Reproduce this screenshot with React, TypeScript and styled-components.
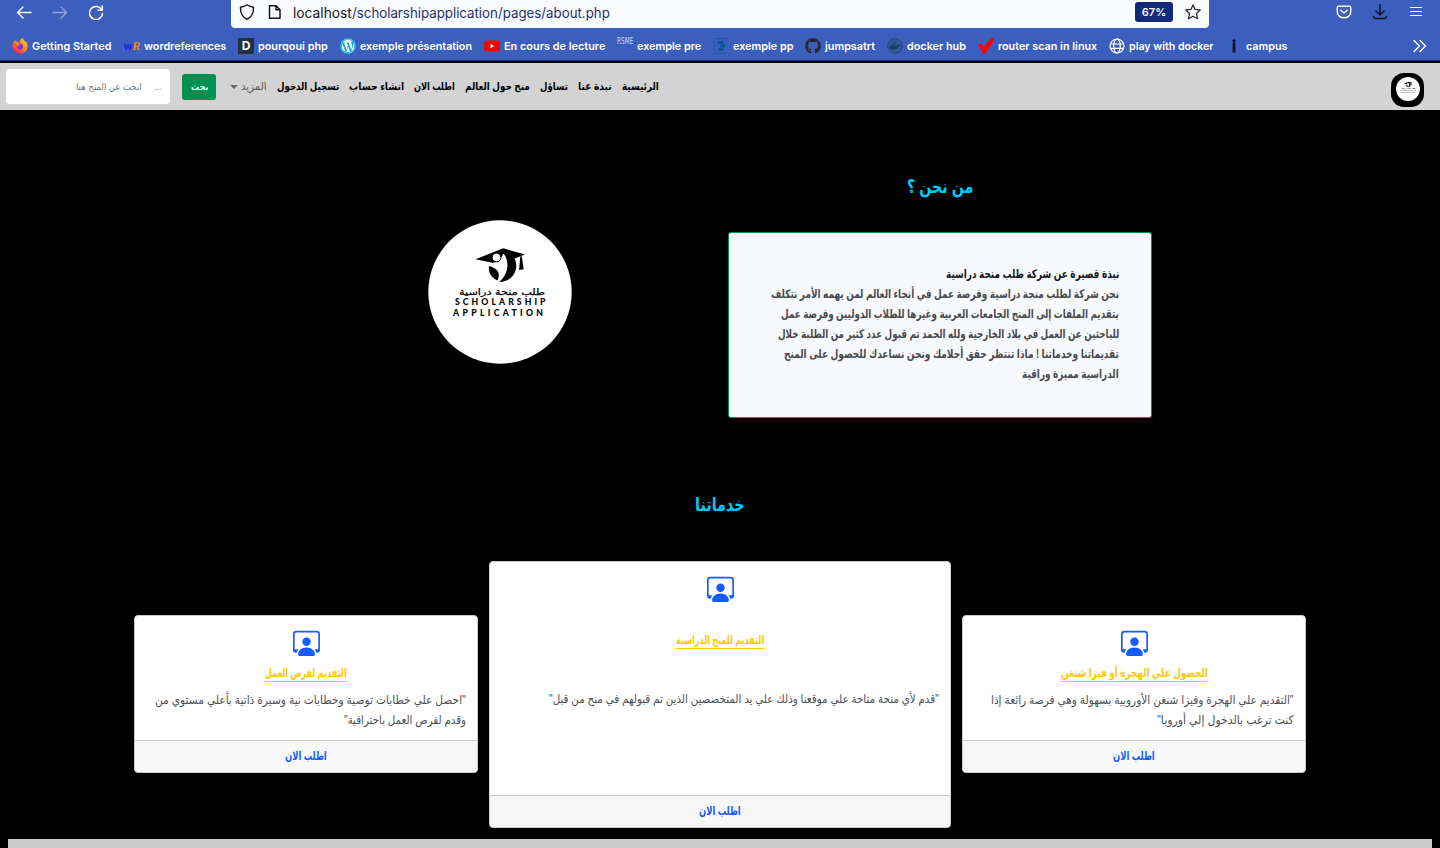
import React, { useLayoutEffect, useRef, useState } from 'react';
import styled, { createGlobalStyle } from 'styled-components';
import { BsPersonWorkspace } from 'react-icons/bs';
import { FaFirefoxBrowser, FaWordpress, FaGithub, FaDocker } from 'react-icons/fa';

const ARABIC = '"Liberation Sans", "DejaVu Sans", sans-serif';
const LATIN = 'Inter, "Liberation Sans", sans-serif';

const GlobalStyle = createGlobalStyle`
  * { box-sizing: border-box; }
  html, body { margin: 0; padding: 0; background: #000; overflow: hidden; }
  #root { height: 848px; }
`;

const Page = styled.div`
  width: 1440px;
  height: 848px;
  display: flex;
  flex-direction: column;
  background: #000;
  font-family: ${ARABIC};
  overflow: hidden;
`;

/* A single line of text that keeps to a fixed measure. */
const Measure = styled.span<{ $w: number }>`
  display: block;
  flex: none;
  width: ${p => p.$w}px;
  direction: ltr;
  white-space: nowrap;
`;
const MeasureText = styled.span`
  display: inline-block;
  transform-origin: left center;
  white-space: nowrap;
`;

function Line({ w, children, ltr = false }: { w: number; children: string; ltr?: boolean }) {
  const ref = useRef<HTMLSpanElement>(null);
  const [scale, setScale] = useState(1);
  useLayoutEffect(() => {
    if (ref.current) setScale(w / ref.current.offsetWidth);
  }, [w]);
  return (
    <Measure $w={w}>
      <MeasureText ref={ref} dir={ltr ? 'ltr' : 'rtl'} style={{ transform: `scaleX(${scale})` }}>
        {children}
      </MeasureText>
    </Measure>
  );
}

/* ---------- browser chrome ---------- */
const Chrome = styled.header`
  flex: none;
  height: 61px;
  background: #3c5fbd;
  border-bottom: 1px solid #14297c;
  font-family: ${LATIN};
`;
const Toolbar = styled.div`
  height: 28px;
  display: flex;
  align-items: flex-start;
`;
const NavButtons = styled.div`
  width: 231px;
  padding: 4px 0 0 16px;
  display: flex;
  gap: 20px;
`;
const AddressBar = styled.div`
  width: 978px;
  height: 28px;
  padding: 0 8px;
  display: flex;
  align-items: center;
  background: #fafbff;
  border-radius: 0 0 4px 4px;
`;
const AddressIcons = styled.div`
  display: flex;
  gap: 12px;
  width: 54px;
  padding-bottom: 4px;
`;
const Address = styled.div`
  flex: 1;
  font-size: 14px;
  line-height: 20px;
  color: #15141a;
  padding-bottom: 2px;
  display: flex;
`;
const AddressPath = styled.span`color: #1f3068;`;
const Zoom = styled.div`
  width: 38px;
  height: 20px;
  margin: 0 12px 4px 0;
  display: flex;
  align-items: center;
  justify-content: center;
  border-radius: 3px;
  background: #14297c;
  color: #fff;
  font-size: 11px;
  font-weight: 600;
`;
const StarBox = styled.div`
  height: 16px;
  margin-bottom: 4px;
`;
const ToolIcons = styled.div`
  flex: 1;
  display: flex;
  justify-content: flex-end;
  gap: 20px;
  padding: 4px 16px 0 0;
`;
const Bookmarks = styled.div`
  height: 32px;
  padding: 4px 12px 0;
  display: flex;
  align-items: center;
  gap: 12px;
  color: #fff;
  font-size: 11px;
  font-weight: 600;
  line-height: 16px;
`;
const Bookmark = styled.div`
  flex: none;
  display: flex;
  align-items: center;
  gap: 4px;
`;
const Favicon = styled.div`
  width: 16px;
  height: 16px;
  display: flex;
  align-items: center;
  justify-content: center;
`;
const LetterD = styled(Favicon)`
  background: #22303f;
  color: #fff;
  font-size: 12px;
  font-weight: 700;
`;
const WordRef = styled(Favicon)`
  color: #2a1be0;
  font-size: 10px;
  font-weight: 700;
  i { color: #f08a24; font-size: 12px; font-family: "Liberation Serif", serif; }
`;
const Rsme = styled(Favicon)`
  align-items: flex-start;
  font-family: "DejaVu Sans Condensed", sans-serif;
  font-size: 8px;
  font-weight: 400;
  line-height: 8px;
  color: #d3dbf4;
`;
const MoreMarks = styled.div`
  margin-left: auto;
  margin-right: 1px;
  height: 16px;
`;

/* ---------- site navigation ---------- */
const SiteNav = styled.nav`
  flex: none;
  height: 47px;
  margin-top: 2px;
  padding: 0 16px 0 5px;
  display: flex;
  align-items: center;
  background: #d3d3d3;
`;
const Search = styled.div`
  width: 166px;
  height: 37px;
  padding: 0 8px 0 10px;
  display: flex;
  align-items: center;
  justify-content: flex-end;
  gap: 12px;
  border: 1px solid #ced4da;
  border-radius: 4px;
  background: #fff;
  color: #6c757d;
  font-size: 9px;
`;
const SearchButton = styled.button`
  width: 34px;
  height: 26px;
  margin-left: 11px;
  padding: 0;
  display: flex;
  align-items: center;
  justify-content: center;
  border: 0;
  border-radius: 3px;
  background: #009150;
  color: #fff;
  font: bold 9px ${ARABIC};
`;
const More = styled.div`
  margin-left: 14px;
  display: flex;
  align-items: center;
  gap: 3px;
  color: #555;
  font-size: 11px;
  font-weight: 400;
`;
const Caret = styled.i`
  border: 4px solid transparent;
  border-top-color: #646464;
  border-bottom: 0;
`;
const Links = styled.div`
  flex: 1;
  display: flex;
  gap: 10px;
  margin-left: 10px;
  color: #000;
  font-size: 11px;
  font-weight: 700;
`;
const Badge = styled.div`
  width: 33px;
  height: 34px;
  margin-top: 6px;
  padding-bottom: 1px;
  display: flex;
  align-items: center;
  justify-content: center;
  border-radius: 13px;
  background: #000;
`;

/* ---------- about ---------- */
const About = styled.section`
  flex: none;
  height: 375px;
  display: flex;
`;
const LogoColumn = styled.div`
  width: 728px;
  padding: 110px 0 0 428px;
`;
const AboutColumn = styled.div`
  width: 424px;
  display: flex;
  flex-direction: column;
  align-items: center;
`;
const Heading = styled.h2<{ $top: number }>`
  margin: 0;
  padding-top: ${p => p.$top}px;
  color: #00c8f8;
  font-size: 19px;
  line-height: 28px;
  font-weight: 700;
`;
const AboutCard = styled.div`
  width: 424px;
  height: 186px;
  margin-top: 31px;
  padding: 31px 32px 0;
  display: flex;
  flex-direction: column;
  align-items: flex-end;
  border: 1px solid #009150;
  border-radius: 3px;
  background: #f8f9fc;
  color: #4a4b4e;
  font-size: 12px;
  line-height: 20px;
  font-weight: 700;
`;
const AboutTitle = styled.div`color: #16181b;`;

/* ---------- services ---------- */
const Services = styled.section`
  flex: none;
  height: 354px;
  display: flex;
  flex-direction: column;
  align-items: center;
`;
const Cards = styled.div`
  margin-top: 42px;
  display: flex;
  align-items: center;
  gap: 11px;
`;
const Card = styled.article<{ $large?: boolean }>`
  width: ${p => (p.$large ? 462 : 344)}px;
  height: ${p => (p.$large ? 267 : 158)}px;
  margin-bottom: ${p => (p.$large ? 0 : 1)}px;
  display: flex;
  flex-direction: column;
  border: 1px solid #c8c8c8;
  border-radius: 4px;
  background: #fff;
  overflow: hidden;
`;
const CardBody = styled.div<{ $large?: boolean }>`
  flex: 1;
  padding: 13px 11px 0;
  display: flex;
  flex-direction: column;
  align-items: flex-end;
  color: #4b4f54;
  font-size: 12px;
  line-height: 20px;
`;
const CardIcon = styled.div`
  align-self: center;
  height: 27px;
  color: #135dff;
`;
const CardTitle = styled.h3<{ $large?: boolean }>`
  align-self: center;
  margin: ${p => (p.$large ? '30px 0 40px' : '9px 0 8px')};
  height: 17px;
  border-bottom: 1px solid #ffc800;
  color: #ffc800;
  font-size: 12px;
  line-height: 16px;
  font-weight: 700;
`;
const CardFooter = styled.div`
  height: 32px;
  padding-bottom: 1px;
  display: flex;
  align-items: center;
  justify-content: center;
  border-top: 1px solid #c8c8c8;
  background: #f7f7f7;
  color: #135dff;
  font-size: 12px;
  font-weight: 700;
`;
const BottomBar = styled.footer`
  flex: none;
  height: 9px;
  margin: 0 8px;
  background: #ccc;
`;

const Logo = ({ size }: { size: number }) => (
  <svg width={size} height={size} viewBox="0 0 144 144" display="block">
    <circle cx="72" cy="72" r="71.7" fill="#fff" />
    <path d="M47.5 39.3 75.3 28.3 97 34.5 86.5 38.5C91.5 48 86 61.5 71 62 79 56 83 43 75.5 33.5L71 41.5 64.5 42.8Z" fill="#000" />
    <path d="M61 46C68 48 73.5 52 69.5 60.5 63 57.5 60 52 61 46Z" fill="#000" />
    <path d="M92.3 36.5 93.7 36 95.7 49.3 91 50Z" fill="#000" />
    <circle cx="68.5" cy="37.5" r="4.4" fill="#fff" stroke="#000" strokeWidth="1" />
    <g fill="#000">
      <text x="74" y="74.5" textAnchor="middle" direction="rtl" fontFamily="DejaVu Sans" fontSize="9" stroke="#000" strokeWidth=".25" textLength="86" lengthAdjust="spacingAndGlyphs">طلب منحة دراسية</text>
      <text x="27" y="84.8" fontFamily="Lato" fontWeight="900" fontSize="8.6" textLength="90.5">SCHOLARSHIP</text>
      <text x="25" y="96.2" fontFamily="Lato" fontWeight="900" fontSize="8.6" textLength="90">APPLICATION</text>
    </g>
  </svg>
);

const Stroke = ({ d, color = '#fff', opacity = 1, w = 1.4 }: { d: string; color?: string; opacity?: number; w?: number }) => (
  <svg width="16" height="16" viewBox="0 0 16 16" fill="none" stroke={color} strokeOpacity={opacity} strokeWidth={w} strokeLinecap="round" strokeLinejoin="round" display="block">
    <path d={d} />
  </svg>
);

const marks: { icon: React.ReactNode; text: string; w: number }[] = [
  { icon: (
    <svg width="16" height="16" viewBox="0 0 16 16">
      <defs><linearGradient id="flame" x1="1" y1="0" x2="0.2" y2="1"><stop offset="0" stopColor="#ffe226" /><stop offset="0.5" stopColor="#ff8a16" /><stop offset="1" stopColor="#f5156c" /></linearGradient></defs>
      <path d="M3 2 1 6a7.2 7.2 0 1 0 14 1C14.500 4 12 3 10.500 1 9.500 3 10 4 8 5 6 5 4 4 3 2Z" fill="url(#flame)" />
      <circle cx="8" cy="8.700" r="3.200" fill="#8a2be0" />
      <FaFirefoxBrowser size={16} fill="url(#flame)" />
    </svg>), text: 'Getting Started', w: 80 },
  { icon: <WordRef>w<i>R</i></WordRef>, text: 'wordreferences', w: 82 },
  { icon: <LetterD>D</LetterD>, text: 'pourqoui php', w: 70 },
  { icon: (
    <svg width="16" height="16" viewBox="0 0 16 16"><circle cx="8" cy="8" r="8" fill="#12a5d8" /><FaWordpress x={0.5} y={0.5} size={15} color="#fff" /></svg>), text: 'exemple présentation', w: 112 },
  { icon: (
    <svg width="16" height="16" viewBox="0 0 16 16"><rect x="0" y="2.5" width="16" height="11" rx="3" fill="#f00" /><path d="M6.5 5.8v4.4L10.2 8z" fill="#fff" /></svg>), text: 'En cours de lecture', w: 101 },
  { icon: <Rsme><Line w={16} ltr>RSME</Line></Rsme>, text: 'exemple pre', w: 64 },
  { icon: (
    <svg width="16" height="16" viewBox="0 0 16 16" fill="none" stroke="#0e529c"><path d="M1 .7h13M1 15.3h13M1.5 3v10" strokeWidth=".6" /><path d="M5 4.5h5.500M7 8h5M5 11.500h5.500" strokeWidth="3" /></svg>), text: 'exemple pp', w: 60 },
  { icon: <FaGithub size={16} color="#24292f" />, text: 'jumpsatrt', w: 50 },
  { icon: (
    <svg width="16" height="16" viewBox="0 0 16 16"><circle cx="8" cy="8" r="7.4" fill="#315a9c" stroke="#24476f" /><FaDocker x={2.5} y={2.5} size={11} color="#183c5e" /></svg>), text: 'docker hub', w: 59 },
  { icon: (
    <svg width="16" height="16" viewBox="0 0 16 16"><path d="M0 7 3.500 5.500 6 9 12.500.5 16 0V3L8 14.500 5.500 16Z" fill="#f00" /></svg>), text: 'router scan in linux', w: 99 },
  { icon: (
    <svg width="16" height="16" viewBox="0 0 16 16" fill="none" stroke="#fff" strokeWidth="1.2"><circle cx="8" cy="8" r="7" /><ellipse cx="8" cy="8" rx="3.3" ry="7" /><path d="M1.5 6h13M1.5 10.3h13" /></svg>), text: 'play with docker', w: 85 },
  { icon: (
    <svg width="16" height="16" viewBox="0 0 16 16" fill="none"><path d="M1 1c-1 5 3 5 5 4M15 1c1 5-3 5-5 4" stroke="#2a64c8" strokeWidth="1.4" /><circle cx="8" cy="3" r="1.7" fill="#101225" /><path d="M8 5v9.500" stroke="#101225" strokeWidth="2.800" /></svg>), text: 'campus', w: 41 },
];

const links: [string, number][] = [
  ['تسجيل الدخول', 62],
  ['انشاء حساب', 55],
  ['اطلب الان', 41],
  ['منح حول العالم', 65],
  ['تساؤل', 28],
  ['نبدة عنا', 34],
  ['الرئيسية', 37],
];

const about: [string, number][] = [
  ['نحن شركة لطلب منحة دراسية وفرصة عمل في أنحاء العالم لمن يهمه الأمر نتكلف', 348],
  ['بتقديم الملفات إلى المنح الجامعات العربية وغيرها للطلاب الدوليين وفرصة عمل', 338],
  ['للباحثين عن العمل في بلاد الخارجية ولله الحمد تم قبول عدد كثير من الطلبة خلال', 341],
  ['تقديماتنا وخدماتنا ! ماذا تنتظر حقق أحلامك ونحن نساعدك للحصول على المنح', 335],
  ['الدراسية مميزة وراقية', 97],
];

interface Service { title: [string, number]; lines: [string, number][]; large?: boolean }
const services: Service[] = [
  {
    title: ['التقديم لفرص العمل', 82],
    lines: [['"احصل علي خطابات توصية وخطابات نية وسيرة ذاتية بأعلي مستوي من', 311], ['وقدم لفرص العمل باحترافية"', 122]],
  },
  {
    large: true,
    title: ['التقديم للمنح الدراسية', 88],
    lines: [['"قدم لأي منحة متاحة علي موقعنا وذلك علي يد المتخصصين الذين تم قبولهم في منح من قبل"', 390]],
  },
  {
    title: ['الحصول علي الهجرة أو فيزا شنغن', 147],
    lines: [['"التقديم علي الهجرة وفيزا شنغن الأوروبية بسهولة وهي فرصة رائعة إذا', 303], ['كنت ترغب بالدخول إلي أوروبا"', 137]],
  },
];

export default function App() {
  return (
    <>
      <GlobalStyle />
      <Page>
        <Chrome>
          <Toolbar>
            <NavButtons>
              <Stroke d="M15 8.5H1.500M7 3 1.500 8.5 7 14" />
              <Stroke d="M1 8.5h13.500M9 3 14.500 8.5 9 14" opacity={0.45} />
              <Stroke d="M13.800 6A6.5 6.5 0 1 0 14.5 9.5M14.3 2v4.3H10" w={1.5} />
            </NavButtons>
            <AddressBar>
              <AddressIcons>
                <Stroke d="M8 .8C6 2.3 4 3 1.5 3.2 1.2 9 3.5 13.3 8 15.3 12.5 13.3 14.8 9 14.5 3.2 12 3 10 2.3 8 .8Z" color="#15141a" />
                <Stroke d="M2.500 1.7H9L13 5.7V14.3H2.500ZM9 1.7V5.7H13" color="#15141a" w={1.5} />
              </AddressIcons>
              <Address>
                <Line w={59} ltr>localhost</Line>
                <AddressPath><Line w={258} ltr>/scholarshipapplication/pages/about.php</Line></AddressPath>
              </Address>
              <Zoom>67%</Zoom>
              <StarBox>
                <Stroke d="M8 .9 10.1 5.4 15.2 6 11.5 9.5 12.5 14.7 8 12.2 3.5 14.7 4.5 9.5.8 6 5.9 5.4Z" color="#2b2a33" w={1.3} />
              </StarBox>
            </AddressBar>
            <ToolIcons>
              <Stroke d="M2.5 2.2h11a1.2 1.2 0 0 1 1.2 1.2V8A6.7 5.8 0 0 1 1.3 8V3.4A1.2 1.2 0 0 1 2.5 2.2ZM4.8 6.2 8 9l3.2-2.8" />
              <Stroke d="M8 .5v10M4 7l4 4 4-4M1.700 12.500v.7a1.3 1.3 0 0 0 1.3 1.3h10a1.3 1.3 0 0 0 1.3-1.3v-.7" color="#0b0c20" />
              <Stroke d="M2.5 3.5h11M2.5 7.500h11M2.5 11.500h11" w={1.2} />
            </ToolIcons>
          </Toolbar>
          <Bookmarks>
            {marks.map(m => (
              <Bookmark key={m.text}>
                <Favicon>{m.icon}</Favicon>
                <Line w={m.w} ltr>{m.text}</Line>
              </Bookmark>
            ))}
            <MoreMarks><Stroke d="M3 2.5 8.5 8 3 13.5M9 2.5 14.5 8 9 13.5" w={1.3} /></MoreMarks>
          </Bookmarks>
        </Chrome>

        <SiteNav>
          <Search>
            <Line w={66}>ابحث عن المنح هنا</Line>
            <Line w={8} ltr>...</Line>
          </Search>
          <SearchButton><Line w={17}>بحث</Line></SearchButton>
          <More><Caret /><Line w={26}>المزيد</Line></More>
          <Links>
            {links.map(([text, w]) => <Line key={text} w={w}>{text}</Line>)}
          </Links>
          <Badge><Logo size={24} /></Badge>
        </SiteNav>

        <About>
          <LogoColumn><Logo size={144} /></LogoColumn>
          <AboutColumn>
            <Heading $top={63}><Line w={66}>من نحن ؟</Line></Heading>
            <AboutCard>
              <AboutTitle><Line w={173}>نبذة قصيرة عن شركة طلب منحة دراسية</Line></AboutTitle>
              {about.map(([text, w]) => <Line key={text} w={w}>{text}</Line>)}
            </AboutCard>
          </AboutColumn>
        </About>

        <Services>
          <Heading $top={6}><Line w={50}>خدماتنا</Line></Heading>
          <Cards>
            {services.map(s => (
              <Card key={s.title[0]} $large={s.large}>
                <CardBody>
                  <CardIcon><BsPersonWorkspace size={27} /></CardIcon>
                  <CardTitle $large={s.large}><Line w={s.title[1]}>{s.title[0]}</Line></CardTitle>
                  {s.lines.map(([text, w]) => <Line key={text} w={w}>{text}</Line>)}
                </CardBody>
                <CardFooter><Line w={42}>اطلب الان</Line></CardFooter>
              </Card>
            ))}
          </Cards>
        </Services>
        <BottomBar />
      </Page>
    </>
  );
}
